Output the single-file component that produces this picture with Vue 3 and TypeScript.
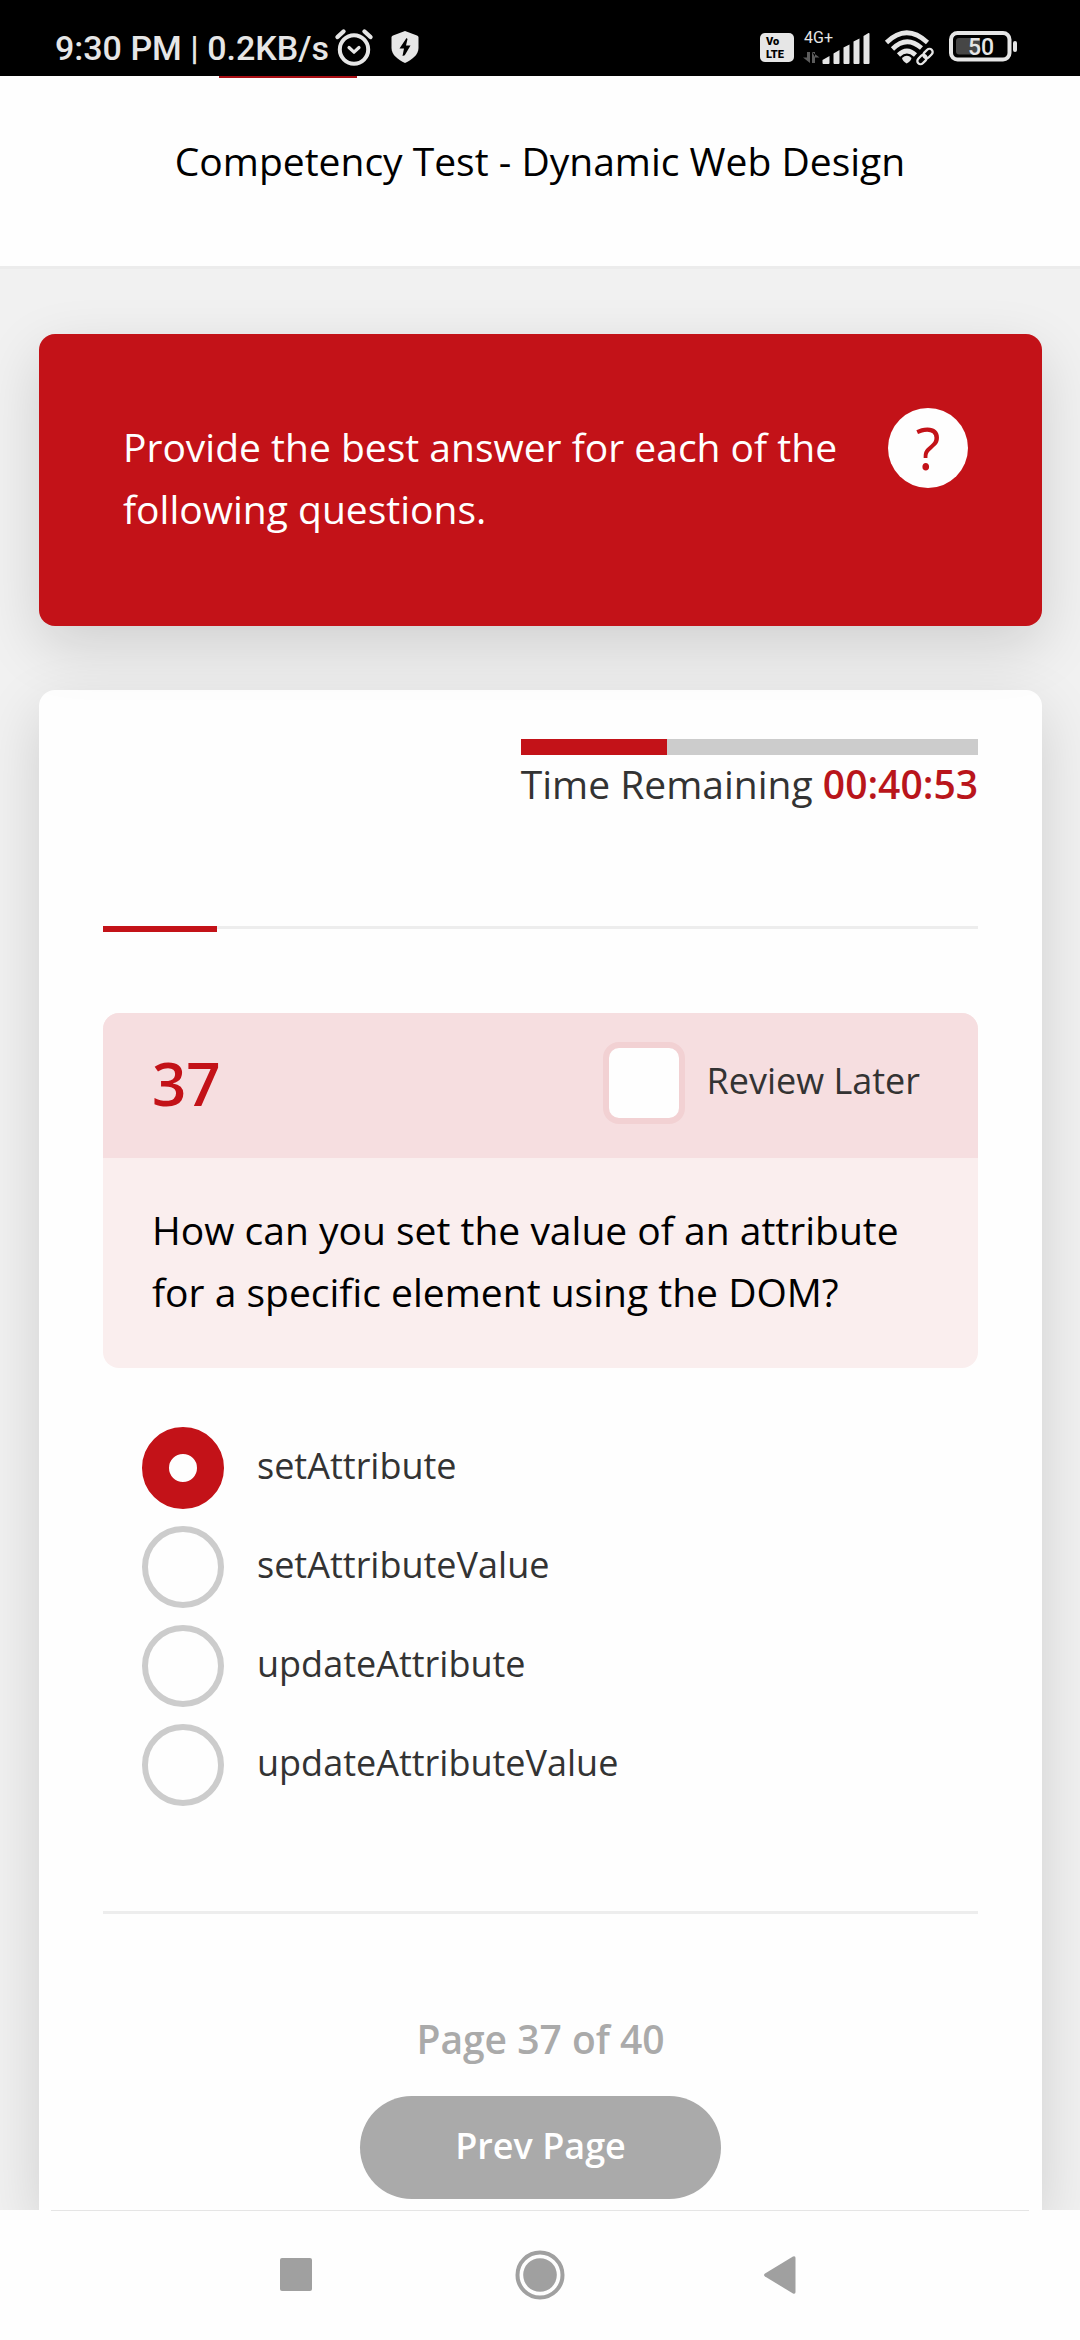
<script setup lang="ts">
import { ref } from 'vue'

interface Question {
  number: number
  text: string
  options: string[]
}

const question: Question = {
  number: 37,
  text: 'How can you set the value of an attribute for a specific element using the DOM?',
  options: ['setAttribute', 'setAttributeValue', 'updateAttribute', 'updateAttributeValue'],
}

const pageCount = 40
const timeLeft = '00:40:53'
const timeUsedPercent = 32
const sectionPercent = 13
const answer = ref('setAttribute')
const reviewLater = ref(false)
</script>

<template>
  <div class="screen">
    <div class="status-bar">
      <div class="status-group">
        <span class="clock">9:30 PM | 0.2KB/s</span>
        <svg class="alarm" width="40" height="38" viewBox="0 0 40 38" fill="none" stroke="#e6e6e6" stroke-linecap="round">
          <circle cx="20" cy="21.5" r="14.2" stroke-width="4" />
          <path d="M3.5 9 9.5 3.5M36.5 9 30.5 3.5" stroke-width="4.4" />
          <path d="m15 19.500 5 4.700 5-4.700" stroke-width="3.200" stroke-linejoin="round" />
        </svg>
        <svg class="shield" width="28" height="34" viewBox="0 0 28 34">
          <path d="M14 1 26 5.500q1.500.6 1.500 2V18c0 7-6.500 11.500-13.500 15C7 29.500.5 25 .5 18V7.500q0-1.400 1.500-2Z" fill="#e6e6e6" />
          <path d="M15.500 8 8.500 18.500h4.500L11.500 26l2.300-.8 5.700-9.700H15L16.500 9Z" fill="#000" />
        </svg>
      </div>
      <div class="status-group">
        <div class="volte">Vo<br />LTE</div>
        <svg class="signal" width="68" height="36" viewBox="0 0 68 36" fill="#e6e6e6">
          <text x="1" y="14" class="network">4G+</text>
          <path d="M4 23h3v11L0 28.500h4ZM9 23h3v5.500h4.500L9 23v11h3V28Z" fill="#5c5c5c" />
          <path d="M19.500 31 26.500 27v7q0 1-1 1h-5q-1 0-1-1ZM30.500 24.500 36.500 21v13q0 1-1 1h-4q-1 0-1-1ZM40.500 18.500 46.500 15.500V34q0 1-1 1h-4q-1 0-1-1ZM50.500 12.500 56.500 9.500V34q0 1-1 1h-4q-1 0-1-1ZM60.500 7 65.500 4q1-.5 1 1v29q0 1-1 1h-4q-1 0-1-1Z" />
        </svg>
        <svg class="wifi" width="50" height="38" viewBox="0 0 50 38" fill="none" stroke="#e6e6e6">
          <path d="M2.500 14.500Q22.500-5 43.500 14.500" stroke-width="4.600" />
          <path d="M8.500 21Q22.500 7 37.500 20" stroke-width="4.600" />
          <path d="M14.500 27Q22.800 19 31.500 27" stroke-width="4.600" />
          <path d="M18 30q5-4.500 9.500 0-.5 3-4.800 5.500Q18.500 33 18 30Z" fill="#e6e6e6" stroke="none" />
          <g transform="rotate(-45 41 28.500)">
            <rect x="31" y="25" width="20" height="7" rx="3.500" stroke="#000" stroke-width="6" />
            <g stroke-width="2.300">
              <rect x="31.500" y="25.300" width="10.500" height="6.400" rx="3.200" />
              <rect x="40" y="25.300" width="10.500" height="6.400" rx="3.200" />
            </g>
          </g>
        </svg>
        <svg class="battery" width="69" height="32" viewBox="0 0 69 32">
          <rect x="2" y="2" width="58.500" height="26.500" rx="6.500" fill="none" stroke="#e6e6e6" stroke-width="4" />
          <rect x="7" y="7" width="24" height="16.500" rx="3" fill="#464646" />
          <rect x="64" y="10" width="4" height="11" rx="2" fill="#e6e6e6" />
          <text x="32" y="24" text-anchor="middle" class="charge">50</text>
        </svg>
      </div>
    </div>

    <header class="header">
      <div class="brand-line"></div>
      <h1>Competency Test - Dynamic Web Design</h1>
    </header>

    <main class="content">
      <section class="notice">
        <p>Provide the best answer for each of the following questions.</p>
        <button type="button" class="help" aria-label="Help">?</button>
      </section>

      <section class="card">
        <div class="timer">
          <div class="timer-track">
            <div class="timer-fill" :style="{ width: timeUsedPercent + '%' }"></div>
          </div>
          <p>Time Remaining <strong>{{ timeLeft }}</strong></p>
        </div>

        <div class="rule section-rule">
          <div class="section-fill" :style="{ width: sectionPercent + '%' }"></div>
        </div>

        <form @submit.prevent>
          <div class="question">
            <div class="question-head">
              <span class="number">{{ question.number }}</span>
              <label class="choice review">
                <input v-model="reviewLater" type="checkbox" name="review" />
                <span>Review Later</span>
              </label>
            </div>
            <p class="question-text">{{ question.text }}</p>
          </div>

          <div class="options">
            <label v-for="option in question.options" :key="option" class="choice option">
              <input v-model="answer" type="radio" name="answer" :value="option" />
              <span>{{ option }}</span>
            </label>
          </div>

          <div class="rule"></div>

          <div class="pager">
            <p>Page {{ question.number }} of {{ pageCount }}</p>
            <button type="button" class="prev">Prev Page</button>
          </div>
        </form>
      </section>
    </main>

    <nav class="nav-bar">
      <button type="button" aria-label="Recent apps">
        <svg width="50" height="50" viewBox="0 0 50 50"><rect x="9" y="8" width="32" height="33" rx="2" fill="#a0a0a0" /></svg>
      </button>
      <button type="button" aria-label="Home">
        <svg width="50" height="50" viewBox="0 0 50 50">
          <circle cx="25" cy="25" r="22.500" fill="none" stroke="#a0a0a0" stroke-width="4" />
          <circle cx="25" cy="25" r="16.800" fill="#a0a0a0" />
        </svg>
      </button>
      <button type="button" aria-label="Back">
        <svg width="50" height="50" viewBox="0 0 50 50"><path d="M6 23.500 34 6.500q2.500-1 2.500 1.500v34q0 2.500-2.500 1.500L6 26.500q-2-1.500 0-3Z" fill="#a0a0a0" /></svg>
      </button>
    </nav>
  </div>
</template>

<style>
body {
  background: #f1f1f1;
}
</style>

<style scoped>
.screen {
  display: flex;
  flex-direction: column;
  min-height: 100vh;
  font-family: "Open Sans", "Noto Sans", sans-serif;
  font-size: 39px;
  line-height: 62px;
  color: #333;
}

h1,
p {
  margin: 0;
  font-size: inherit;
  font-weight: 400;
}

button {
  border: 0;
  padding: 0;
  font-family: inherit;
  cursor: pointer;
}

svg {
  display: block;
}

.status-bar {
  display: flex;
  justify-content: space-between;
  align-items: flex-end;
  height: 76px;
  box-sizing: border-box;
  padding: 0 62px 10px 55px;
  background: #000;
  color: #e6e6e6;
  font-family: Roboto, sans-serif;
}

.status-group {
  display: flex;
  align-items: center;
}

.clock {
  padding-top: 2px;
  font-size: 34px;
  font-weight: 500;
  line-height: 36px;
}

.alarm {
  margin-left: 5px;
}

.shield {
  margin-left: 17px;
}

.volte {
  box-sizing: border-box;
  width: 34px;
  height: 29px;
  padding: 2px 0 0 6px;
  border-radius: 5px;
  background: #e6e6e6;
  color: #000;
  font: 900 11px/13px Roboto, sans-serif;
}

.network {
  font: 400 16px Roboto, sans-serif;
}

.signal {
  margin-left: 9px;
}

.wifi {
  margin-left: 13px;
}

.battery {
  margin-left: 15px;
}

.charge {
  font: 500 23px Roboto, sans-serif;
  fill: #e6e6e6;
}

.header {
  padding-bottom: 74px;
  border-bottom: 3px solid #ececec;
  background: #fefefe;
  color: #000;
  text-align: center;
}

.brand-line {
  width: 138px;
  height: 2px;
  margin: 0 0 52px 219px;
  background: #a80e14;
}

.content {
  display: flex;
  flex: 1;
  flex-direction: column;
  gap: 64px;
  padding: 65px 38px 0 39px;
  overflow: hidden;
}

.notice {
  position: relative;
  z-index: 1;
  display: flex;
  justify-content: space-between;
  align-items: flex-start;
  gap: 40px;
  padding: 74px 74px 86px 84px;
  border-radius: 16px;
  background: #c31218;
  color: #fff;
  box-shadow: 0 20px 60px rgba(0, 0, 0, 0.14);
}

.notice p {
  padding-top: 8px;
}

.help {
  flex: none;
  width: 80px;
  height: 80px;
  border-radius: 50%;
  background: #fefefe;
  color: #c31218;
  font-size: 58px;
  line-height: 80px;
}

.card {
  flex: 1;
  padding: 49px 64px 11px;
  border-radius: 16px 16px 0 0;
  background: #fefefe;
  box-shadow: 0 20px 60px rgba(0, 0, 0, 0.14);
}

.timer {
  width: fit-content;
  margin: 0 0 115px auto;
}

.timer-track {
  height: 16px;
  margin-bottom: 2px;
  background: #ccc;
}

.timer-fill {
  height: 100%;
  background: #c31218;
}

.timer p {
  line-height: 54px;
}

.timer strong {
  font-weight: 600;
  color: #b9151b;
}

.rule {
  height: 3px;
  background: #ededed;
}

.section-rule {
  margin-bottom: 84px;
}

.section-fill {
  height: 6px;
  background: #c31218;
}

.question {
  overflow: hidden;
  border-radius: 16px;
  background: #faeeee;
}

.question-head {
  display: flex;
  justify-content: space-between;
  align-items: center;
  padding: 29px 58px 34px 49px;
  background: #f6dee0;
}

.number {
  font-size: 60px;
  font-weight: 600;
  color: #c31218;
}

.question-text {
  padding: 41px 49px 45px;
  color: #000;
}

.choice {
  display: flex;
  align-items: center;
  font-size: 36px;
  line-height: 50px;
  cursor: pointer;
}

.choice span {
  padding-bottom: 4px;
}

.choice input {
  flex: none;
  appearance: none;
  box-sizing: border-box;
  width: 82px;
  height: 82px;
  margin: 0;
  border: 6px solid #ccc;
  background: #fefefe;
}

.review {
  gap: 21px;
}

.review input {
  border-color: #f2d1d3;
  border-radius: 16px;
}

.review input:checked {
  background: #c31218;
}

.options {
  display: flex;
  flex-direction: column;
  gap: 17px;
  padding: 59px 39px 105px;
}

.option {
  gap: 33px;
}

.option input {
  border-radius: 50%;
}

.option input:checked {
  border: 27px solid #c31218;
}

.pager {
  display: flex;
  flex-direction: column;
  align-items: center;
  gap: 26px;
  padding-top: 94px;
  color: #aaa;
}

.pager p {
  font-weight: 600;
}

.prev {
  padding: 25px 95px 28px;
  border-radius: 52px;
  background: #aaa;
  color: #fff;
  font-size: 36px;
  font-weight: 600;
  line-height: 50px;
}

.nav-bar {
  display: flex;
  justify-content: center;
  align-items: center;
  gap: 194px;
  height: 130px;
  background: linear-gradient(#e5e5e5, #e5e5e5) center top / calc(100% - 102px) 1px no-repeat #fefefe;
}

.nav-bar button {
  background: none;
}
</style>
